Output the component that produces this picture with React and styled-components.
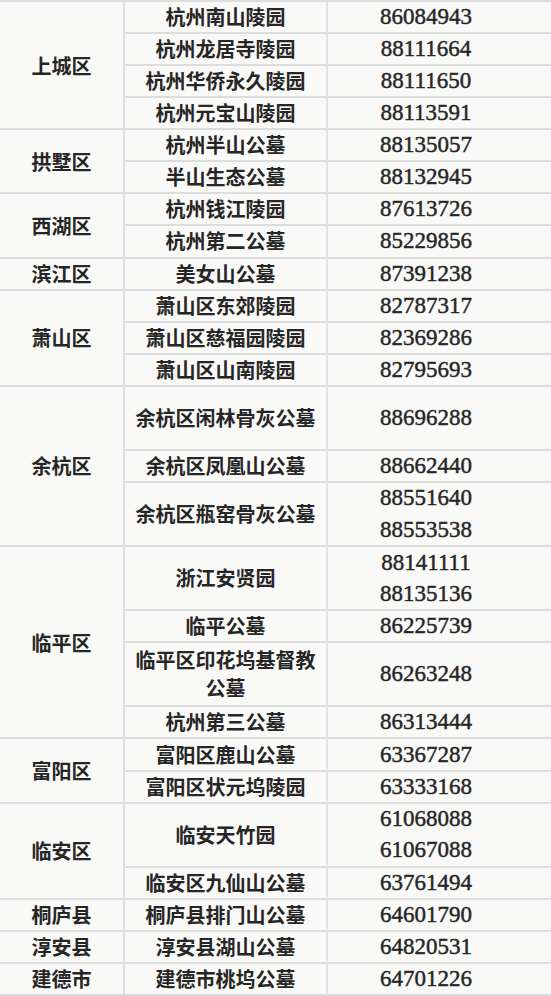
import React from "react";
import styled, { createGlobalStyle } from "styled-components";

const data = [
  {
    district: "上城区",
    items: [
      { name: "杭州南山陵园", phones: ["86084943"] },
      { name: "杭州龙居寺陵园", phones: ["88111664"] },
      { name: "杭州华侨永久陵园", phones: ["88111650"] },
      { name: "杭州元宝山陵园", phones: ["88113591"] },
    ],
  },
  {
    district: "拱墅区",
    items: [
      { name: "杭州半山公墓", phones: ["88135057"] },
      { name: "半山生态公墓", phones: ["88132945"] },
    ],
  },
  {
    district: "西湖区",
    items: [
      { name: "杭州钱江陵园", phones: ["87613726"] },
      { name: "杭州第二公墓", phones: ["85229856"] },
    ],
  },
  {
    district: "滨江区",
    items: [{ name: "美女山公墓", phones: ["87391238"] }],
  },
  {
    district: "萧山区",
    items: [
      { name: "萧山区东郊陵园", phones: ["82787317"] },
      { name: "萧山区慈福园陵园", phones: ["82369286"] },
      { name: "萧山区山南陵园", phones: ["82795693"] },
    ],
  },
  {
    district: "余杭区",
    items: [
      { name: "余杭区闲林骨灰公墓", phones: ["88696288"], span: 2 },
      { name: "余杭区凤凰山公墓", phones: ["88662440"] },
      { name: "余杭区瓶窑骨灰公墓", phones: ["88551640", "88553538"], span: 2 },
    ],
  },
  {
    district: "临平区",
    items: [
      { name: "浙江安贤园", phones: ["88141111", "88135136"], span: 2 },
      { name: "临平公墓", phones: ["86225739"] },
      { name: "临平区印花坞基督教公墓", phones: ["86263248"], span: 2 },
      { name: "杭州第三公墓", phones: ["86313444"] },
    ],
  },
  {
    district: "富阳区",
    items: [
      { name: "富阳区鹿山公墓", phones: ["63367287"] },
      { name: "富阳区状元坞陵园", phones: ["63333168"] },
    ],
  },
  {
    district: "临安区",
    items: [
      { name: "临安天竹园", phones: ["61068088", "61067088"], span: 2 },
      { name: "临安区九仙山公墓", phones: ["63761494"] },
    ],
  },
  {
    district: "桐庐县",
    items: [{ name: "桐庐县排门山公墓", phones: ["64601790"] }],
  },
  {
    district: "淳安县",
    items: [{ name: "淳安县湖山公墓", phones: ["64820531"] }],
  },
  {
    district: "建德市",
    items: [{ name: "建德市桃坞公墓", phones: ["64701226"] }],
  },
];

const GlobalStyle = createGlobalStyle`
  html, body {
    margin: 0;
    padding: 0;
    background: #f9f9f7;
  }
  body {
    font-family: "Noto Sans CJK SC", "Liberation Serif", serif;
    color: #262626;
  }
`;

export default function App() {
  // 每个区占若干行，行号在这里累加
  let row = 1;
  const cells = [];

  data.forEach((group, gi) => {
    const groupSpan = group.items.reduce((s, it) => s + (it.span || 1), 0);
    cells.push(
      <District key={"d" + gi} $row={row} $span={groupSpan}>
        {group.district}
      </District>
    );
    group.items.forEach((item, ii) => {
      const span = item.span || 1;
      cells.push(
        <Name key={"n" + gi + ii} $row={row} $span={span}>
          {item.name}
        </Name>
      );
      cells.push(
        <Phones key={"p" + gi + ii} $row={row} $span={span}>
          {item.phones.map((p) => (
            <Phone key={p}>{p}</Phone>
          ))}
        </Phones>
      );
      row += span;
    });
  });

  return (
    <>
      <GlobalStyle />
      <Table>{cells}</Table>
    </>
  );
}

const Table = styled.div`
  display: grid;
  grid-template-columns: 125px 203px 1fr;
  grid-template-rows: repeat(31, 1fr);
  height: 996px;
  border-top: 2px solid #dedede;
  box-sizing: border-box;
`;

const Cell = styled.div`
  grid-row: ${(p) => p.$row} / span ${(p) => p.$span};
  display: flex;
  align-items: center;
  justify-content: center;
  text-align: center;
  box-sizing: border-box;
  border-bottom: 2px solid #dcdcdc;
`;

const District = styled(Cell)`
  grid-column: 1;
  border-right: 2px solid #dedede;
  font-size: 20px;
  font-weight: 700;
`;

const Name = styled(Cell)`
  grid-column: 2;
  border-right: 2px solid #e2e2e2;
  padding: 0 10px;
  font-size: 20px;
  font-weight: 700;
  line-height: 28px;
`;

const Phones = styled(Cell)`
  grid-column: 3;
  flex-direction: column;
  align-items: stretch;
  padding-right: 27px;
`;

const Phone = styled.div`
  flex: 1;
  display: flex;
  align-items: center;
  justify-content: center;
  font-family: "Liberation Serif", serif;
  font-size: 23px;
  font-weight: 400;
  -webkit-text-stroke: 0.45px #262626;
`;
